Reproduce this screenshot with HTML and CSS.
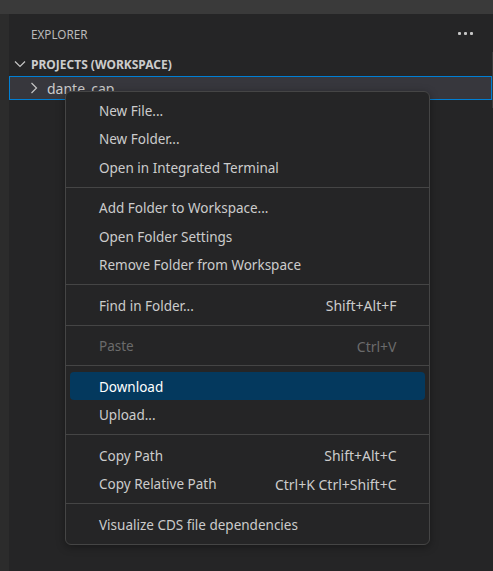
FILE: index.html
```html
<!DOCTYPE html>
<html>
<head>
<meta charset="utf-8">
<link rel="stylesheet" href="styles.css">
</head>
<body>
<div class="titlebar"></div>
<div class="workbench">
  <div class="activitybar"></div>
  <div class="sidebar">
    <div class="sidebar-title">
      <span class="title-label">EXPLORER</span>
      <span class="more"><i></i><i></i><i></i></span>
    </div>
    <div class="section-header">
      <svg class="chev-down" width="12" height="8" viewBox="0 0 12 8"><path d="M1 1.5 L6 6.5 L11 1.5" fill="none" stroke="#c5c5c5" stroke-width="1.2"/></svg>
      <span>PROJECTS (WORKSPACE)</span>
    </div>
    <div class="tree-row">
      <svg class="chev-right" width="8" height="12" viewBox="0 0 8 12"><path d="M1.5 1 L6.5 6 L1.5 11" fill="none" stroke="#c5c5c5" stroke-width="1.2"/></svg>
      <span>dante_cap</span>
    </div>
    <div class="slider"></div>
  </div>
</div>
<div class="context-menu">
  <div class="item"><span class="label">New File...</span></div>
  <div class="item"><span class="label">New Folder...</span></div>
  <div class="item"><span class="label">Open in Integrated Terminal</span></div>
  <div class="sep"></div>
  <div class="item"><span class="label">Add Folder to Workspace...</span></div>
  <div class="item"><span class="label">Open Folder Settings</span></div>
  <div class="item"><span class="label">Remove Folder from Workspace</span></div>
  <div class="sep"></div>
  <div class="item"><span class="label">Find in Folder...</span><span class="key">Shift+Alt+F</span></div>
  <div class="sep"></div>
  <div class="item disabled"><span class="label">Paste</span><span class="key">Ctrl+V</span></div>
  <div class="sep"></div>
  <div class="item active"><span class="label">Download</span></div>
  <div class="item"><span class="label">Upload...</span></div>
  <div class="sep"></div>
  <div class="item"><span class="label">Copy Path</span><span class="key">Shift+Alt+C</span></div>
  <div class="item"><span class="label">Copy Relative Path</span><span class="key">Ctrl+K Ctrl+Shift+C</span></div>
  <div class="sep"></div>
  <div class="item"><span class="label">Visualize CDS file dependencies</span></div>
</div>
</body>
</html>
```

FILE: styles.css
```css
html, body {
  margin: 0;
  padding: 0;
  background: #252526;
  font-family: "Noto Sans", "Open Sans", sans-serif;
  overflow: hidden;
}
body {
  width: 493px;
  height: 571px;
  position: relative;
}
.titlebar {
  height: 14px;
  background: #3a3a3a;
}
.workbench {
  display: flex;
  height: 557px;
}
.activitybar {
  width: 9px;
  background: #2c2c2c;
}
.sidebar {
  flex: 1;
  background: #252526;
  position: relative;
}
.sidebar-title {
  height: 38px;
  display: flex;
  align-items: center;
  justify-content: space-between;
  padding: 0 20px 0 22px;
  box-sizing: border-box;
  color: #bbbbbb;
  font-size: 11.7px;
}
.title-label {
  padding-top: 2px;
}
.more {
  display: flex;
  gap: 3px;
}
.more i {
  width: 3px;
  height: 3px;
  background: #c5c5c5;
  border-radius: 1px;
}
.section-header {
  height: 24px;
  display: flex;
  align-items: center;
  color: #cccccc;
  font-weight: bold;
  font-size: 12px;
  padding-left: 5px;
}
.chev-down {
  margin-right: 5px;
}
.tree-row {
  height: 24px;
  box-sizing: border-box;
  margin-right: 1px;
  border: 1px solid #007fd4;
  background: #37373d;
  display: flex;
  align-items: center;
  color: #cccccc;
  font-size: 14px;
  padding-left: 20px;
}
.chev-right {
  margin-right: 9px;
}
.slider {
  position: absolute;
  right: 0;
  top: 38px;
  width: 1px;
  height: 56px;
  background: #3a3a3a;
}
.context-menu {
  position: absolute;
  left: 65px;
  top: 91px;
  width: 365px;
  box-sizing: border-box;
  background: #252526;
  border: 1px solid #454545;
  border-radius: 6px;
  padding: 3.75px 0 6px;
  box-shadow: 0 2px 8px rgba(0, 0, 0, 0.36);
  font-size: 13.5px;
  color: #cccccc;
}
.item {
  height: 28.5px;
  box-sizing: border-box;
  margin: 0 4px;
  border-radius: 4px;
  display: flex;
  align-items: center;
  justify-content: space-between;
  padding: 1px 28.5px 0 29px;
}
.key {
  font-size: 14px;
}
.item.active {
  background: #04395e;
  color: #ffffff;
}
.item.disabled {
  color: #6b6b6b;
}
.sep {
  height: 1px;
  background: #454545;
  margin: 5.5px 0;
}
```
